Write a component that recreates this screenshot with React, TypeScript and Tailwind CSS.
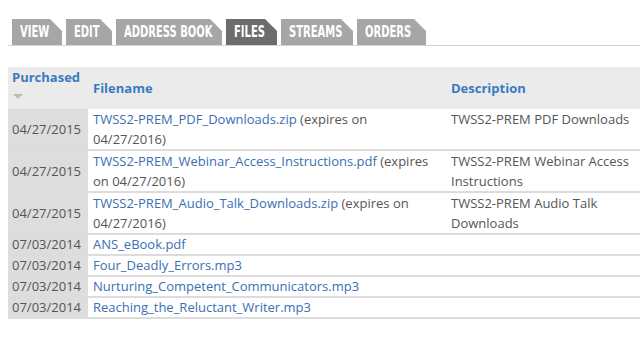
import type { ReactNode } from "react";

const TABS = [
  { label: "VIEW", w: "w-[50px]", active: false },
  { label: "EDIT", w: "w-[46px]", active: false },
  { label: "ADDRESS BOOK", w: "w-[106px]", active: false },
  { label: "FILES", w: "w-[51px]", active: true },
  { label: "STREAMS", w: "w-[72px]", active: false },
  { label: "ORDERS", w: "w-[69px]", active: false },
];

interface Row {
  date: string;
  file: string;
  expires?: ReactNode;
  desc?: string;
}

const ROWS: Row[] = [
  {
    date: "04/27/2015",
    file: "TWSS2-PREM_PDF_Downloads.zip",
    expires: " (expires on 04/27/2016)",
    desc: "TWSS2-PREM PDF Downloads",
  },
  {
    date: "04/27/2015",
    file: "TWSS2-PREM_Webinar_Access_Instructions.pdf",
    expires: " (expires on 04/27/2016)",
    desc: "TWSS2-PREM Webinar Access Instructions",
  },
  {
    date: "04/27/2015",
    file: "TWSS2-PREM_Audio_Talk_Downloads.zip",
    expires: " (expires on 04/27/2016)",
    desc: "TWSS2-PREM Audio Talk Downloads",
  },
  { date: "07/03/2014", file: "ANS_eBook.pdf" },
  { date: "07/03/2014", file: "Four_Deadly_Errors.mp3" },
  { date: "07/03/2014", file: "Nurturing_Competent_Communicators.mp3" },
  { date: "07/03/2014", file: "Reaching_the_Reluctant_Writer.mp3" },
];

function Tab({ label, w, active }: { label: string; w: string; active: boolean }) {
  return (
    <li
      className={
        "h-[26px] pl-2 flex items-center overflow-hidden whitespace-nowrap text-white font-bold text-[15px] [clip-path:polygon(0_0,calc(100%-12px)_0,100%_12px,100%_100%,0_100%)] " +
        w +
        " " +
        (active ? "bg-[#6c6c6c]" : "bg-[#a6a6a6]")
      }
      style={{ fontFamily: '"DejaVu Sans Condensed", sans-serif' }}
    >
      <span className="inline-block origin-left scale-x-[0.74]">{label}</span>
    </li>
  );
}

export default function App() {
  return (
    <div
      className="w-[640px] h-[342px] bg-white overflow-hidden"
      style={{ fontFamily: '"Open Sans", "DejaVu Sans", sans-serif' }}
    >
      <ul className="ml-2 mt-[19px] pl-1 flex gap-1 border-b border-[#d4d4d4]">
        {TABS.map(t => (
          <Tab key={t.label} {...t} />
        ))}
      </ul>

      <table className="ml-2 mt-[21px] w-[632px] border-collapse text-[13px] text-[#555]">
        <thead>
          <tr className="bg-[#ebebeb] h-[42px] leading-[20px]">
            <th className="w-[80px] px-1 text-left font-bold text-[#3a7bbf] align-top">
              Purchased
              <div className="mt-[7px] ml-[1px] w-0 h-0 border-x-[5px] border-x-transparent border-t-[5px] border-t-[#bbb]" />
            </th>
            <th className="w-[356px] px-[5px] text-left font-bold text-[#3a7bbf]">Filename</th>
            <th className="px-[7px] text-left font-bold text-[#3a7bbf]">Description</th>
          </tr>
        </thead>
        <tbody>
          {ROWS.map((r, i) => (
            <tr
              key={i}
              className={
                "border-b-2 border-[#dcdcdc] " + (r.expires ? "leading-[20px]" : "leading-[19px]")
              }
            >
              <td className="px-1 bg-[#dddddd] align-middle whitespace-nowrap">{r.date}</td>
              <td className="px-[5px] align-top">
                <a href="#" className="text-[#3a6fb3]">
                  {r.file}
                </a>
                {r.expires}
              </td>
              <td className="px-[7px] align-top">{r.desc}</td>
            </tr>
          ))}
        </tbody>
      </table>
    </div>
  );
}
